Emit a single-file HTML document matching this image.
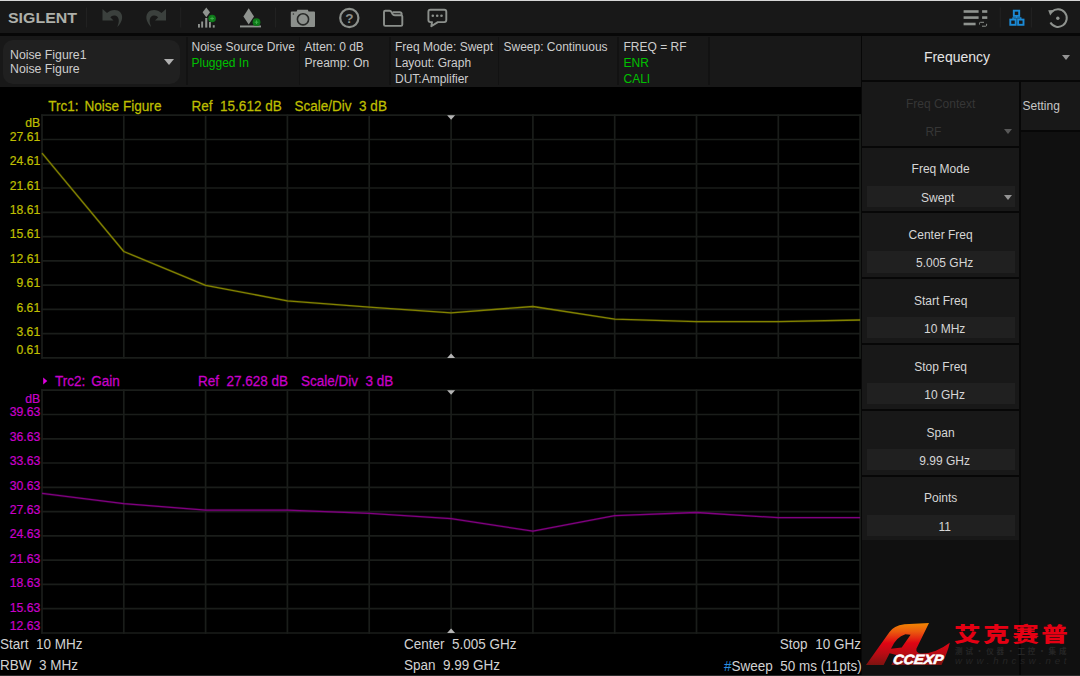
<!DOCTYPE html>
<html><head><meta charset="utf-8"><title>Noise Figure</title>
<style>
*{box-sizing:border-box;margin:0;padding:0}
html,body{width:1080px;height:676px;overflow:hidden;background:#000}
body{position:relative;font-family:"Liberation Sans",sans-serif;color:#d8d8d8;font-size:12px}
.abs{position:absolute}
#topline{left:0;top:0;width:1080px;height:1px;background:#d6d6d6}
#toolbar{left:0;top:1px;width:1080px;height:33px;background:#181818}
#tbline{left:0;top:33.2px;width:1080px;height:2.4px;background:#070707}
#info{left:0;top:35.6px;width:860.7px;height:51.7px;background:#181818}
.vsep{position:absolute;top:1px;width:1.6px;height:48px;background:#121212}
.it{position:absolute;white-space:nowrap;font-size:12px;line-height:16px;color:#cdcdcd}
.g{color:#00c000}
#sel{left:3px;top:3.6px;width:177px;height:43.5px;border-radius:10px;background:#202020}
#right{left:860.7px;top:35.6px;width:219.3px;height:640.4px;background:#070707}
#rhead{left:1.7px;top:0;width:217.6px;height:44.2px;background:#181818}
#rtabbg{left:160.3px;top:96.9px;width:59px;height:543.5px;background:#101010}
#rcolbg{left:1.7px;top:504.8px;width:156.9px;height:135.3px;background:#101010}
#rtab{left:160.3px;top:46.3px;width:59px;height:48.2px;background:#181818}
.mi{position:absolute;left:1.7px;width:156.9px;height:63.7px;background:#181818}
.mi .l{position:absolute;left:-0.2px;width:100%;top:14.8px;text-align:center;font-size:12px;line-height:14px;color:#d6d6d6}
.mi .v{position:absolute;left:4.9px;right:4.7px;top:38px;height:21.2px;background:#202020;text-align:center;font-size:12px;line-height:24.6px;color:#d6d6d6}
.mi.dis .l,.mi.dis .v{color:#363636}
.mi.dis .v{background:#181818}
.tri{position:absolute;width:0;height:0;border-left:4px solid transparent;border-right:4px solid transparent;border-top:5px solid #949494}
.ylab{position:absolute;left:0;width:40.2px;text-align:right;font-size:12.2px;line-height:12px;white-space:nowrap;-webkit-text-stroke:0.22px currentColor;transform:scaleY(1.04)}
.c1{color:#bebe00}
.c2{color:#c800c8}
.ttl{position:absolute;white-space:pre;font-size:13.5px;line-height:14px;transform:scaleY(1.08);transform-origin:0 80%;-webkit-text-stroke:0.25px currentColor}
.bt{position:absolute;white-space:pre;font-size:13.5px;line-height:15px;color:#d2d2d2;transform:scaleY(1.07);transform-origin:0 80%}
#botline{left:0;top:674.5px;width:1080px;height:1.5px;background:#2a2a2a}
</style></head><body>
<div class="abs" id="toolbar">
<svg class="abs" style="left:0;top:-1px" width="1080" height="36" viewBox="0 0 1080 36">
<text x="8" y="22.6" font-family="Liberation Sans, sans-serif" font-weight="bold" font-size="15.4" fill="#aeb0aa" textLength="69" lengthAdjust="spacingAndGlyphs">SIGLENT</text>
<g stroke="#212121" stroke-width="1.2">
<line x1="86.5" y1="7.5" x2="86.5" y2="27.5"/><line x1="180.7" y1="7.5" x2="180.7" y2="27.5"/><line x1="275.5" y1="7.5" x2="275.5" y2="27.5"/>
<line x1="1000.3" y1="7.5" x2="1000.3" y2="27.5"/><line x1="1031.4" y1="7.5" x2="1031.4" y2="27.5"/>
</g>
<!-- undo / redo -->
<path id="undo" d="M102.5 9 L107 13 C111 9.5 117 9 120.5 12.5 C124 17 121.5 23 117.3 27 C119.5 22 119.5 17.5 116 15.8 C113.5 14.8 111.5 15.8 110.3 17.3 L113.5 20.5 L102.5 20.5 Z" fill="#3b403d"/>
<path id="redo" d="M166 9 L161.5 13 C157.500 9.5 151.500 9 148 12.5 C144.500 17 147 23 151.200 27 C149 22 149 17.5 152.500 15.8 C155 14.8 157 15.8 158.200 17.3 L155 20.5 L166 20.5 Z" fill="#3b403d"/>
<!-- peak icon 1 -->
<g fill="#8f938f">
<polygon points="206.3,7.4 210,12.3 206.3,17.2 202.6,12.3"/>
<rect x="198" y="24" width="1.9" height="3.6"/><rect x="201.2" y="21.5" width="1.9" height="6.1"/><rect x="205.2" y="18" width="2.1" height="9.6"/><rect x="209" y="22" width="1.9" height="5.6"/><rect x="212.8" y="25.2" width="1.9" height="2.4"/>
<polygon points="248.7,8.3 254,16.4 248.7,24.6 243.4,16.4"/>
<rect x="240" y="25.5" width="21" height="1.9"/>
</g>
<circle cx="212.1" cy="18.5" r="3.8" fill="#0f7a1a"/><path d="M210.300 18.5h3.600M212.100 16.700v3.600" stroke="#3fae49" stroke-width="1" fill="none"/>
<circle cx="256.500" cy="22.200" r="3.900" fill="#0f7a1a"/><path d="M254.700 22.200h3.600M256.500 20.400v3.600" stroke="#3fae49" stroke-width="1" fill="none"/>
<!-- camera -->
<path d="M291.800 11.600 H296.600 L297.400 9.700 H307.800 L308.600 11.600 H314 Q315 11.600 315 12.600 V25.900 Q315 26.900 314 26.900 H291.800 Q290.800 26.900 290.800 25.900 V12.600 Q290.800 11.600 291.800 11.600 Z" fill="#8c908c"/>
<circle cx="303" cy="19.300" r="5.600" fill="none" stroke="#262826" stroke-width="1.600"/><circle cx="293.400" cy="14" r="0.800" fill="#303230"/>
<!-- help -->
<circle cx="349.300" cy="18" r="9.100" fill="none" stroke="#8c908c" stroke-width="2.200"/>
<text x="349.300" y="22.800" text-anchor="middle" font-family="Liberation Sans, sans-serif" font-weight="bold" font-size="13.500" fill="#8c908c">?</text>
<!-- folder -->
<path d="M384 12 Q384 10.700 385.300 10.700 H389.500 Q390.800 10.700 391.500 12 L392.500 14 Q393.200 15.300 394.800 15.300 H401 Q402.300 15.300 402.300 16.600 V24.600 Q402.300 25.900 401 25.900 H385.300 Q384 25.900 384 24.600 Z M392.800 12.300 H399.800 Q401.600 12.300 401.800 14.500" fill="none" stroke="#8c908c" stroke-width="1.900" stroke-linejoin="round"/>
<!-- chat -->
<path d="M430.400 9.800 H444.300 Q446.300 9.800 446.300 11.800 V20.100 Q446.300 22.100 444.300 22.100 H437.800 L431.300 26.300 L432 22.100 H430.400 Q428.400 22.100 428.400 20.100 V11.800 Q428.400 9.800 430.400 9.800 Z" fill="none" stroke="#8c908c" stroke-width="1.900" stroke-linejoin="round"/>
<g fill="#8c908c"><circle cx="432.800" cy="15.800" r="1.300"/><circle cx="437.200" cy="15.800" r="1.300"/><circle cx="441.500" cy="15.800" r="1.300"/></g>
<!-- list icon -->
<g fill="#8f938f">
<rect x="963.600" y="10.200" width="15" height="2.600"/><rect x="963.600" y="16.300" width="15" height="2.600"/><rect x="963.600" y="22.700" width="12" height="2.600"/>
<rect x="982.100" y="10.200" width="5.200" height="2.600"/><rect x="982.100" y="16.300" width="5.200" height="2.600"/>
</g>
<path d="M979.500 24.500 V23.300 Q979.500 22.300 980.500 22.300 H984 M986.600 23.800 V25.200 Q986.600 26.200 985.600 26.200 H982" fill="none" stroke="#8f938f" stroke-width="1"/>
<!-- network -->
<g fill="none" stroke="#1b8ad6" stroke-width="1.900">
<rect x="1013.800" y="10.700" width="5.400" height="5.200"/><rect x="1010.300" y="19.600" width="5.400" height="5.200"/><rect x="1018.100" y="19.600" width="5.400" height="5.200"/>
<path d="M1016.500 15.900 V17.800 M1013 19.600 V17.800 H1020.800 V19.600" stroke-width="1.300"/>
</g>
<!-- reset -->
<path d="M1051.800 11.800 A8.800 8.800 0 1 1 1050.400 22.600" fill="none" stroke="#8f938f" stroke-width="2"/>
<polygon points="1048.200,10.200 1054.400,10 1050.200,15.500" fill="#8f938f"/>
<circle cx="1057.800" cy="18.200" r="1.700" fill="#8f938f"/>
</svg>
</div>
<div class="abs" id="topline"></div>
<div class="abs" id="tbline"></div>
<div class="abs" id="info"><div class="abs" style="left:0;top:0.9px;width:860px;height:50px">
<div class="abs" id="sel"></div>
<div class="it" style="left:10px;top:11.500px;line-height:14.200px;font-size:12.300px">Noise Figure1<br>Noise Figure</div>
<div class="tri" style="left:163.500px;top:22.500px;border-left-width:5.500px;border-right-width:5.500px;border-top-width:6.500px;border-top-color:#b0b0b0"></div>
<div class="vsep" style="left:186.2px"></div>
<div class="vsep" style="left:298.8px"></div>
<div class="vsep" style="left:389.4px"></div>
<div class="vsep" style="left:497.8px"></div>
<div class="vsep" style="left:617.2px"></div>
<div class="vsep" style="left:708.2px"></div>
<div class="it" style="left:191.500px;top:2.500px">Noise Source Drive<br><span class="g">Plugged In</span></div>
<div class="it" style="left:304.500px;top:2.500px">Atten: 0 dB<br>Preamp: On</div>
<div class="it" style="left:395px;top:2.500px">Freq Mode: Swept<br>Layout: Graph<br>DUT:Amplifier</div>
<div class="it" style="left:503.500px;top:2.500px">Sweep: Continuous</div>
<div class="it" style="left:623.500px;top:2.500px">FREQ = RF<br><span class="g">ENR</span><br><span class="g">CALI</span></div>
</div></div>
<div class="abs" id="right">
<div class="abs" id="rhead"><div style="position:absolute;left:0.600px;width:188px;top:13.400px;text-align:center;font-size:14px;line-height:16px;color:#e4e4e4">Frequency</div><div class="tri" style="left:199.600px;top:19.400px"></div></div>
<div class="abs" id="rtabbg"></div><div class="abs" id="rcolbg"></div>
<div class="abs" id="rtab"><div style="position:absolute;left:1.500px;top:17.100px;font-size:12px;line-height:14px;color:#c6c6c6">Setting</div></div>
<div class="mi dis" style="top:46.3px"><div class="l">Freq Context</div><div class="v" style="padding-right:15px">RF</div><div class="tri" style="left:141.800px;top:47.400px;border-top-color:#585858"></div></div>
<div class="mi" style="top:112.1px"><div class="l">Freq Mode</div><div class="v" style="padding-right:6.5px">Swept</div><div class="tri" style="left:141.600px;top:47.600px"></div></div>
<div class="mi" style="top:177.9px"><div class="l">Center Freq</div><div class="v" style="padding-left:7.5px">5.005 GHz</div></div>
<div class="mi" style="top:243.7px"><div class="l">Start Freq</div><div class="v" style="padding-left:7.5px">10 MHz</div></div>
<div class="mi" style="top:309.5px"><div class="l">Stop Freq</div><div class="v" style="padding-left:7.5px">10 GHz</div></div>
<div class="mi" style="top:375.3px"><div class="l">Span</div><div class="v" style="padding-left:7.5px">9.99 GHz</div></div>
<div class="mi" style="top:441.1px"><div class="l">Points</div><div class="v" style="padding-left:7.5px">11</div></div>
</div>
<svg class="abs" id="charts" style="left:0;top:86px" width="862" height="590" viewBox="0 86 862 590">
<g stroke="#1a1d1a" stroke-width="1.7" fill="none" stroke-linecap="square">
<line x1="42.0" y1="115.2" x2="42.0" y2="357.9"/>
<line x1="123.8" y1="115.2" x2="123.8" y2="357.9"/>
<line x1="205.6" y1="115.2" x2="205.6" y2="357.9"/>
<line x1="287.4" y1="115.2" x2="287.4" y2="357.9"/>
<line x1="369.2" y1="115.2" x2="369.2" y2="357.9"/>
<line x1="451.1" y1="115.2" x2="451.1" y2="357.9"/>
<line x1="532.9" y1="115.2" x2="532.9" y2="357.9"/>
<line x1="614.7" y1="115.2" x2="614.7" y2="357.9"/>
<line x1="696.5" y1="115.2" x2="696.5" y2="357.9"/>
<line x1="778.3" y1="115.2" x2="778.3" y2="357.9"/>
<line x1="860.1" y1="115.2" x2="860.1" y2="357.9"/>
<line x1="42.0" y1="115.2" x2="860.1" y2="115.2"/>
<line x1="42.0" y1="139.5" x2="860.1" y2="139.5"/>
<line x1="42.0" y1="163.8" x2="860.1" y2="163.8"/>
<line x1="42.0" y1="188.0" x2="860.1" y2="188.0"/>
<line x1="42.0" y1="212.3" x2="860.1" y2="212.3"/>
<line x1="42.0" y1="236.6" x2="860.1" y2="236.6"/>
<line x1="42.0" y1="260.9" x2="860.1" y2="260.9"/>
<line x1="42.0" y1="285.1" x2="860.1" y2="285.1"/>
<line x1="42.0" y1="309.4" x2="860.1" y2="309.4"/>
<line x1="42.0" y1="333.7" x2="860.1" y2="333.7"/>
<line x1="42.0" y1="357.9" x2="860.1" y2="357.9"/>
<line x1="42.0" y1="390.2" x2="42.0" y2="633.0"/>
<line x1="123.8" y1="390.2" x2="123.8" y2="633.0"/>
<line x1="205.6" y1="390.2" x2="205.6" y2="633.0"/>
<line x1="287.4" y1="390.2" x2="287.4" y2="633.0"/>
<line x1="369.2" y1="390.2" x2="369.2" y2="633.0"/>
<line x1="451.1" y1="390.2" x2="451.1" y2="633.0"/>
<line x1="532.9" y1="390.2" x2="532.9" y2="633.0"/>
<line x1="614.7" y1="390.2" x2="614.7" y2="633.0"/>
<line x1="696.5" y1="390.2" x2="696.5" y2="633.0"/>
<line x1="778.3" y1="390.2" x2="778.3" y2="633.0"/>
<line x1="860.1" y1="390.2" x2="860.1" y2="633.0"/>
<line x1="42.0" y1="390.2" x2="860.1" y2="390.2"/>
<line x1="42.0" y1="414.5" x2="860.1" y2="414.5"/>
<line x1="42.0" y1="438.8" x2="860.1" y2="438.8"/>
<line x1="42.0" y1="463.0" x2="860.1" y2="463.0"/>
<line x1="42.0" y1="487.3" x2="860.1" y2="487.3"/>
<line x1="42.0" y1="511.6" x2="860.1" y2="511.6"/>
<line x1="42.0" y1="535.9" x2="860.1" y2="535.9"/>
<line x1="42.0" y1="560.1" x2="860.1" y2="560.1"/>
<line x1="42.0" y1="584.4" x2="860.1" y2="584.4"/>
<line x1="42.0" y1="608.7" x2="860.1" y2="608.7"/>
<line x1="42.0" y1="633.0" x2="860.1" y2="633.0"/>
</g>
<polyline points="42.0,153.1 123.8,251.5 205.6,285.3 287.4,300.9 369.2,307.2 451.1,312.8 532.9,306.5 614.7,319.2 696.5,321.6 778.3,321.6 860.1,320.0" fill="none" stroke="#808000" stroke-width="2.6" stroke-opacity="0.22" stroke-linejoin="round"/>
<polyline points="42.0,153.1 123.8,251.5 205.6,285.3 287.4,300.9 369.2,307.2 451.1,312.8 532.9,306.5 614.7,319.2 696.5,321.6 778.3,321.6 860.1,320.0" fill="none" stroke="#828200" stroke-width="1.3" stroke-linejoin="round"/>
<polyline points="42.0,493.4 123.8,503.7 205.6,510.1 287.4,510.1 369.2,513.3 451.1,518.6 532.9,531.2 614.7,515.7 696.5,512.5 778.3,517.7 860.1,517.7" fill="none" stroke="#800080" stroke-width="2.6" stroke-opacity="0.22" stroke-linejoin="round"/>
<polyline points="42.0,493.4 123.8,503.7 205.6,510.1 287.4,510.1 369.2,513.3 451.1,518.6 532.9,531.2 614.7,515.7 696.5,512.5 778.3,517.7 860.1,517.7" fill="none" stroke="#800080" stroke-width="1.3" stroke-linejoin="round"/>
<g fill="#b4b4b4">
<polygon points="447.1,115.2 455.1,115.2 451.1,119.7"/><polygon points="447.1,357.9 455.1,357.9 451.1,353.4"/><polygon points="447.1,390.2 455.1,390.2 451.1,394.7"/><polygon points="447.1,633.0 455.1,633.0 451.1,628.5"/>
</g>
<polygon points="43.2,377.6 43.2,384.4 47.3,381" fill="#e000e0"/>
</svg>
<div class="ylab c1" style="top:117.4px">dB</div>
<div class="ylab c1" style="top:131.4px">27.61</div>
<div class="ylab c1" style="top:155.4px">24.61</div>
<div class="ylab c1" style="top:179.9px">21.61</div>
<div class="ylab c1" style="top:204.4px">18.61</div>
<div class="ylab c1" style="top:228.4px">15.61</div>
<div class="ylab c1" style="top:252.9px">12.61</div>
<div class="ylab c1" style="top:277.4px">9.61</div>
<div class="ylab c1" style="top:301.9px">6.61</div>
<div class="ylab c1" style="top:325.9px">3.61</div>
<div class="ylab c1" style="top:344.4px">0.61</div>
<div class="ylab c2" style="top:392.7px">dB</div>
<div class="ylab c2" style="top:406.2px">39.63</div>
<div class="ylab c2" style="top:430.7px">36.63</div>
<div class="ylab c2" style="top:455.2px">33.63</div>
<div class="ylab c2" style="top:479.7px">30.63</div>
<div class="ylab c2" style="top:503.9px">27.63</div>
<div class="ylab c2" style="top:528.4px">24.63</div>
<div class="ylab c2" style="top:552.9px">21.63</div>
<div class="ylab c2" style="top:577.4px">18.63</div>
<div class="ylab c2" style="top:601.9px">15.63</div>
<div class="ylab c2" style="top:619.9px">12.63</div>
<div class="ttl c1" style="left:48.2px;top:100.1px">Trc1:</div><div class="ttl c1" style="left:84.4px;top:100.1px;font-size:13.6px">Noise Figure</div>
<div class="ttl c1" style="left:191.6px;top:100.1px">Ref  15.612 dB</div>
<div class="ttl c1" style="left:294.6px;top:100.1px">Scale/Div  3 dB</div>
<div class="ttl c2" style="left:55px;top:374.8px">Trc2:</div><div class="ttl c2" style="left:91.2px;top:374.8px">Gain</div>
<div class="ttl c2" style="left:198px;top:374.8px">Ref  27.628 dB</div>
<div class="ttl c2" style="left:301px;top:374.8px">Scale/Div  3 dB</div>
<div class="bt" style="left:0px;top:636.500px">Start  10 MHz</div>
<div class="bt" style="left:0px;top:658px">RBW  3 MHz</div>
<div class="bt" style="left:404px;top:636.500px">Center  5.005 GHz</div>
<div class="bt" style="left:404px;top:658px">Span  9.99 GHz</div>
<div class="bt" style="right:219.100px;top:636.500px">Stop  10 GHz</div>
<div class="bt" style="right:218.300px;top:658.600px"><span style="color:#2a8fe0">#</span>Sweep  50 ms (11pts)</div>
<div class="abs" id="botline"></div>
<svg class="abs" style="left:862px;top:615px" width="218" height="61" viewBox="862 615 218 61">
<defs><linearGradient id="ag" x1="0" y1="622" x2="0" y2="666" gradientUnits="userSpaceOnUse">
<stop offset="0" stop-color="#f28c00"/><stop offset="0.22" stop-color="#ea5a0e"/><stop offset="0.48" stop-color="#e00514"/><stop offset="0.72" stop-color="#b80b14"/><stop offset="1" stop-color="#781410"/></linearGradient></defs>
<path fill="url(#ag)" fill-rule="evenodd" d="M866 665 L889.5 632 Q893.5 626 904.400 624.300 L929 622.900 L916.500 648.500 Q915.500 652.500 920.200 653.400 Q934 654.500 949.800 642.800 Q947.500 653 941.500 665 L891.300 665 L896.500 655 L889.600 653.300 L883.600 665 Z M905.400 634.300 L910.600 634.800 L901.700 647.400 L891 648.800 Q896 637 905.400 634.300 Z"/>
<text transform="translate(892.400 664.300) skewX(-8)" x="0" y="0" font-family="Liberation Sans, sans-serif" font-weight="bold" font-style="italic" font-size="13.400" fill="#fff" stroke="#fff" stroke-width="0.600" textLength="50.5" lengthAdjust="spacingAndGlyphs">CCEXP</text>
<text transform="translate(953.900 641.600) scale(1.285 1)" x="0" y="0" font-family="Noto Sans CJK SC, WenQuanYi Zen Hei, sans-serif" font-weight="900" font-size="20.600" letter-spacing="2.100" fill="#e60013">艾克赛普</text>
<text x="955" y="654.300" font-family="Noto Sans CJK SC, WenQuanYi Zen Hei, sans-serif" font-weight="700" font-size="7.500" fill="#262626" textLength="111.500" lengthAdjust="spacing">测试·仪器·工控·集成</text>
<text x="955" y="664.300" font-family="Liberation Sans, sans-serif" font-style="italic" font-size="9.600" fill="#252525" textLength="111.500" lengthAdjust="spacing">www.hncsw.net</text>
</svg>
</body></html>
